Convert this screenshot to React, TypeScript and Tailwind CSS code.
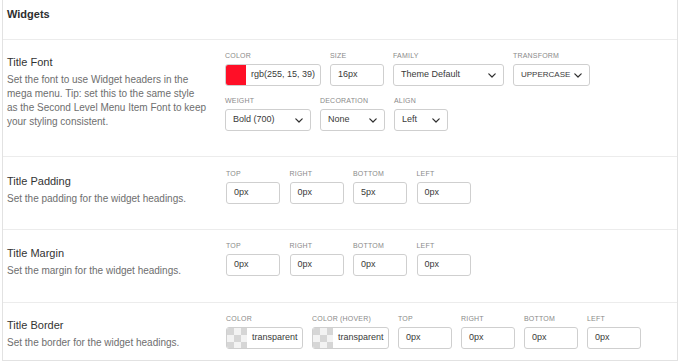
import React from "react";

const Chevron = () => (
  <svg width="8" height="5" viewBox="0 0 8 5" fill="none" className="shrink-0">
    <path d="M0.8 0.8 L4 4 L7.2 0.8" stroke="#2f2f2f" strokeWidth="1.2" strokeLinecap="round" strokeLinejoin="round" />
  </svg>
);

const Checker = () => (
  <svg width="20" height="22" viewBox="0 0 20 22" className="shrink-0">
    <rect width="20" height="22" fill="#f3f3f3" />
    {[0, 1, 2].map((r) =>
      [0, 1, 2].map((c) =>
        (r + c) % 2 === 0 ? <rect key={`${r}-${c}`} x={c * 7} y={r * 7 + 1} width="7" height="7" fill="#d6d6d6" /> : null
      )
    )}
  </svg>
);

const Label = ({ children }: { children: React.ReactNode }) => (
  <div className="h-[9px] leading-[9px] text-[7px] tracking-[0.2px] text-[#8a8a8a] uppercase mb-[4px] whitespace-nowrap">
    {children}
  </div>
);

const Field = ({ label, w, children }: { label: string; w: string; children: React.ReactNode }) => (
  <div className={`${w} shrink-0`}>
    <Label>{label}</Label>
    {children}
  </div>
);

const TextInput = ({ value }: { value: string }) => (
  <div className="h-[22px] w-full border border-[#cfcfcf] rounded-[3px] bg-white flex items-center pl-[7px] text-[9px] text-[#3a3a3a]">
    {value}
  </div>
);

const Select = ({ value, small }: { value: string; small?: boolean }) => (
  <div className="h-[22px] w-full border border-[#cfcfcf] rounded-[3px] bg-white flex items-center justify-between pl-[7px] pr-[7px] text-[#3a3a3a]">
    <span className={small ? "text-[8px] whitespace-nowrap" : "text-[9px] whitespace-nowrap"}>{value}</span>
    <Chevron />
  </div>
);

const ColorInput = ({ transparent, value }: { transparent?: boolean; value: string }) => (
  <div className="h-[22px] w-full border border-[#cfcfcf] rounded-[3px] bg-white flex items-center overflow-hidden text-[9px] text-[#3a3a3a]">
    {transparent ? <Checker /> : <div className="w-[20px] h-full bg-[#ff0f27] shrink-0" />}
    <span className="pl-[5px] whitespace-nowrap">{value}</span>
  </div>
);

const LeftCol = ({ title, desc, pt }: { title: string; desc: React.ReactNode; pt: string }) => (
  <div className={`w-[223px] shrink-0 pl-[4px] ${pt}`}>
    <div className="text-[11px] leading-[14px] text-[#333]">{title}</div>
    <div className="mt-[4px] text-[10px] leading-[14px] text-[#6e6e6e]">{desc}</div>
  </div>
);

export default function App() {
  return (
    <div className="w-[680px] h-[363px] bg-white font-['Liberation_Sans',Arial,sans-serif]">
      <div className="ml-[2px] w-[676px] border-l border-r border-b border-[#e2e2e2]">
        <div className="h-[40px] border-b border-[#ececec] pl-[4px] pt-[7px]">
          <div className="text-[11px] leading-[14px] font-bold text-[#2e2e2e]">Widgets</div>
        </div>

        {/* Title Font */}
        <div className="h-[117px] border-b border-[#ececec] flex">
          <LeftCol
            pt="pt-[15px]"
            title="Title Font"
            desc={
              <>
                Set the font to use Widget headers in the
                <br />
                mega menu. Tip: set this to the same style
                <br />
                as the Second Level Menu Item Font to keep
                <br />
                your styling consistent.
              </>
            }
          />
          <div className="pt-[11px] -ml-[1px]">
            <div className="flex gap-[9px]">
              <Field label="Color" w="w-[96px]">
                <ColorInput value="rgb(255, 15, 39)" />
              </Field>
              <Field label="Size" w="w-[54px]">
                <TextInput value="16px" />
              </Field>
              <Field label="Family" w="w-[111px]">
                <Select value="Theme Default" />
              </Field>
              <Field label="Transform" w="w-[77px]">
                <Select value="UPPERCASE" small />
              </Field>
            </div>
            <div className="flex gap-[9px] mt-[10px]">
              <Field label="Weight" w="w-[86px]">
                <Select value="Bold (700)" />
              </Field>
              <Field label="Decoration" w="w-[65px]">
                <Select value="None" />
              </Field>
              <Field label="Align" w="w-[54px]">
                <Select value="Left" />
              </Field>
            </div>
          </div>
        </div>

        {/* Title Padding */}
        <div className="h-[73px] border-b border-[#ececec] flex">
          <LeftCol pt="pt-[17px]" title="Title Padding" desc="Set the padding for the widget headings." />
          <div className="pt-[12px] flex gap-[9.5px]">
            <Field label="Top" w="w-[54px]">
              <TextInput value="0px" />
            </Field>
            <Field label="Right" w="w-[54px]">
              <TextInput value="0px" />
            </Field>
            <Field label="Bottom" w="w-[54px]">
              <TextInput value="5px" />
            </Field>
            <Field label="Left" w="w-[54px]">
              <TextInput value="0px" />
            </Field>
          </div>
        </div>

        {/* Title Margin */}
        <div className="h-[73px] border-b border-[#ececec] flex">
          <LeftCol pt="pt-[16px]" title="Title Margin" desc="Set the margin for the widget headings." />
          <div className="pt-[11px] flex gap-[9.5px]">
            <Field label="Top" w="w-[54px]">
              <TextInput value="0px" />
            </Field>
            <Field label="Right" w="w-[54px]">
              <TextInput value="0px" />
            </Field>
            <Field label="Bottom" w="w-[54px]">
              <TextInput value="0px" />
            </Field>
            <Field label="Left" w="w-[54px]">
              <TextInput value="0px" />
            </Field>
          </div>
        </div>

        {/* Title Border */}
        <div className="h-[57px] flex">
          <LeftCol pt="pt-[15px]" title="Title Border" desc="Set the border for the widget headings." />
          <div className="pt-[11px] flex gap-[9px]">
            <Field label="Color" w="w-[77px]">
              <ColorInput transparent value="transparent" />
            </Field>
            <Field label="Color (Hover)" w="w-[77px]">
              <ColorInput transparent value="transparent" />
            </Field>
            <Field label="Top" w="w-[54px]">
              <TextInput value="0px" />
            </Field>
            <Field label="Right" w="w-[54px]">
              <TextInput value="0px" />
            </Field>
            <Field label="Bottom" w="w-[54px]">
              <TextInput value="0px" />
            </Field>
            <Field label="Left" w="w-[54px]">
              <TextInput value="0px" />
            </Field>
          </div>
        </div>
      </div>
    </div>
  );
}
